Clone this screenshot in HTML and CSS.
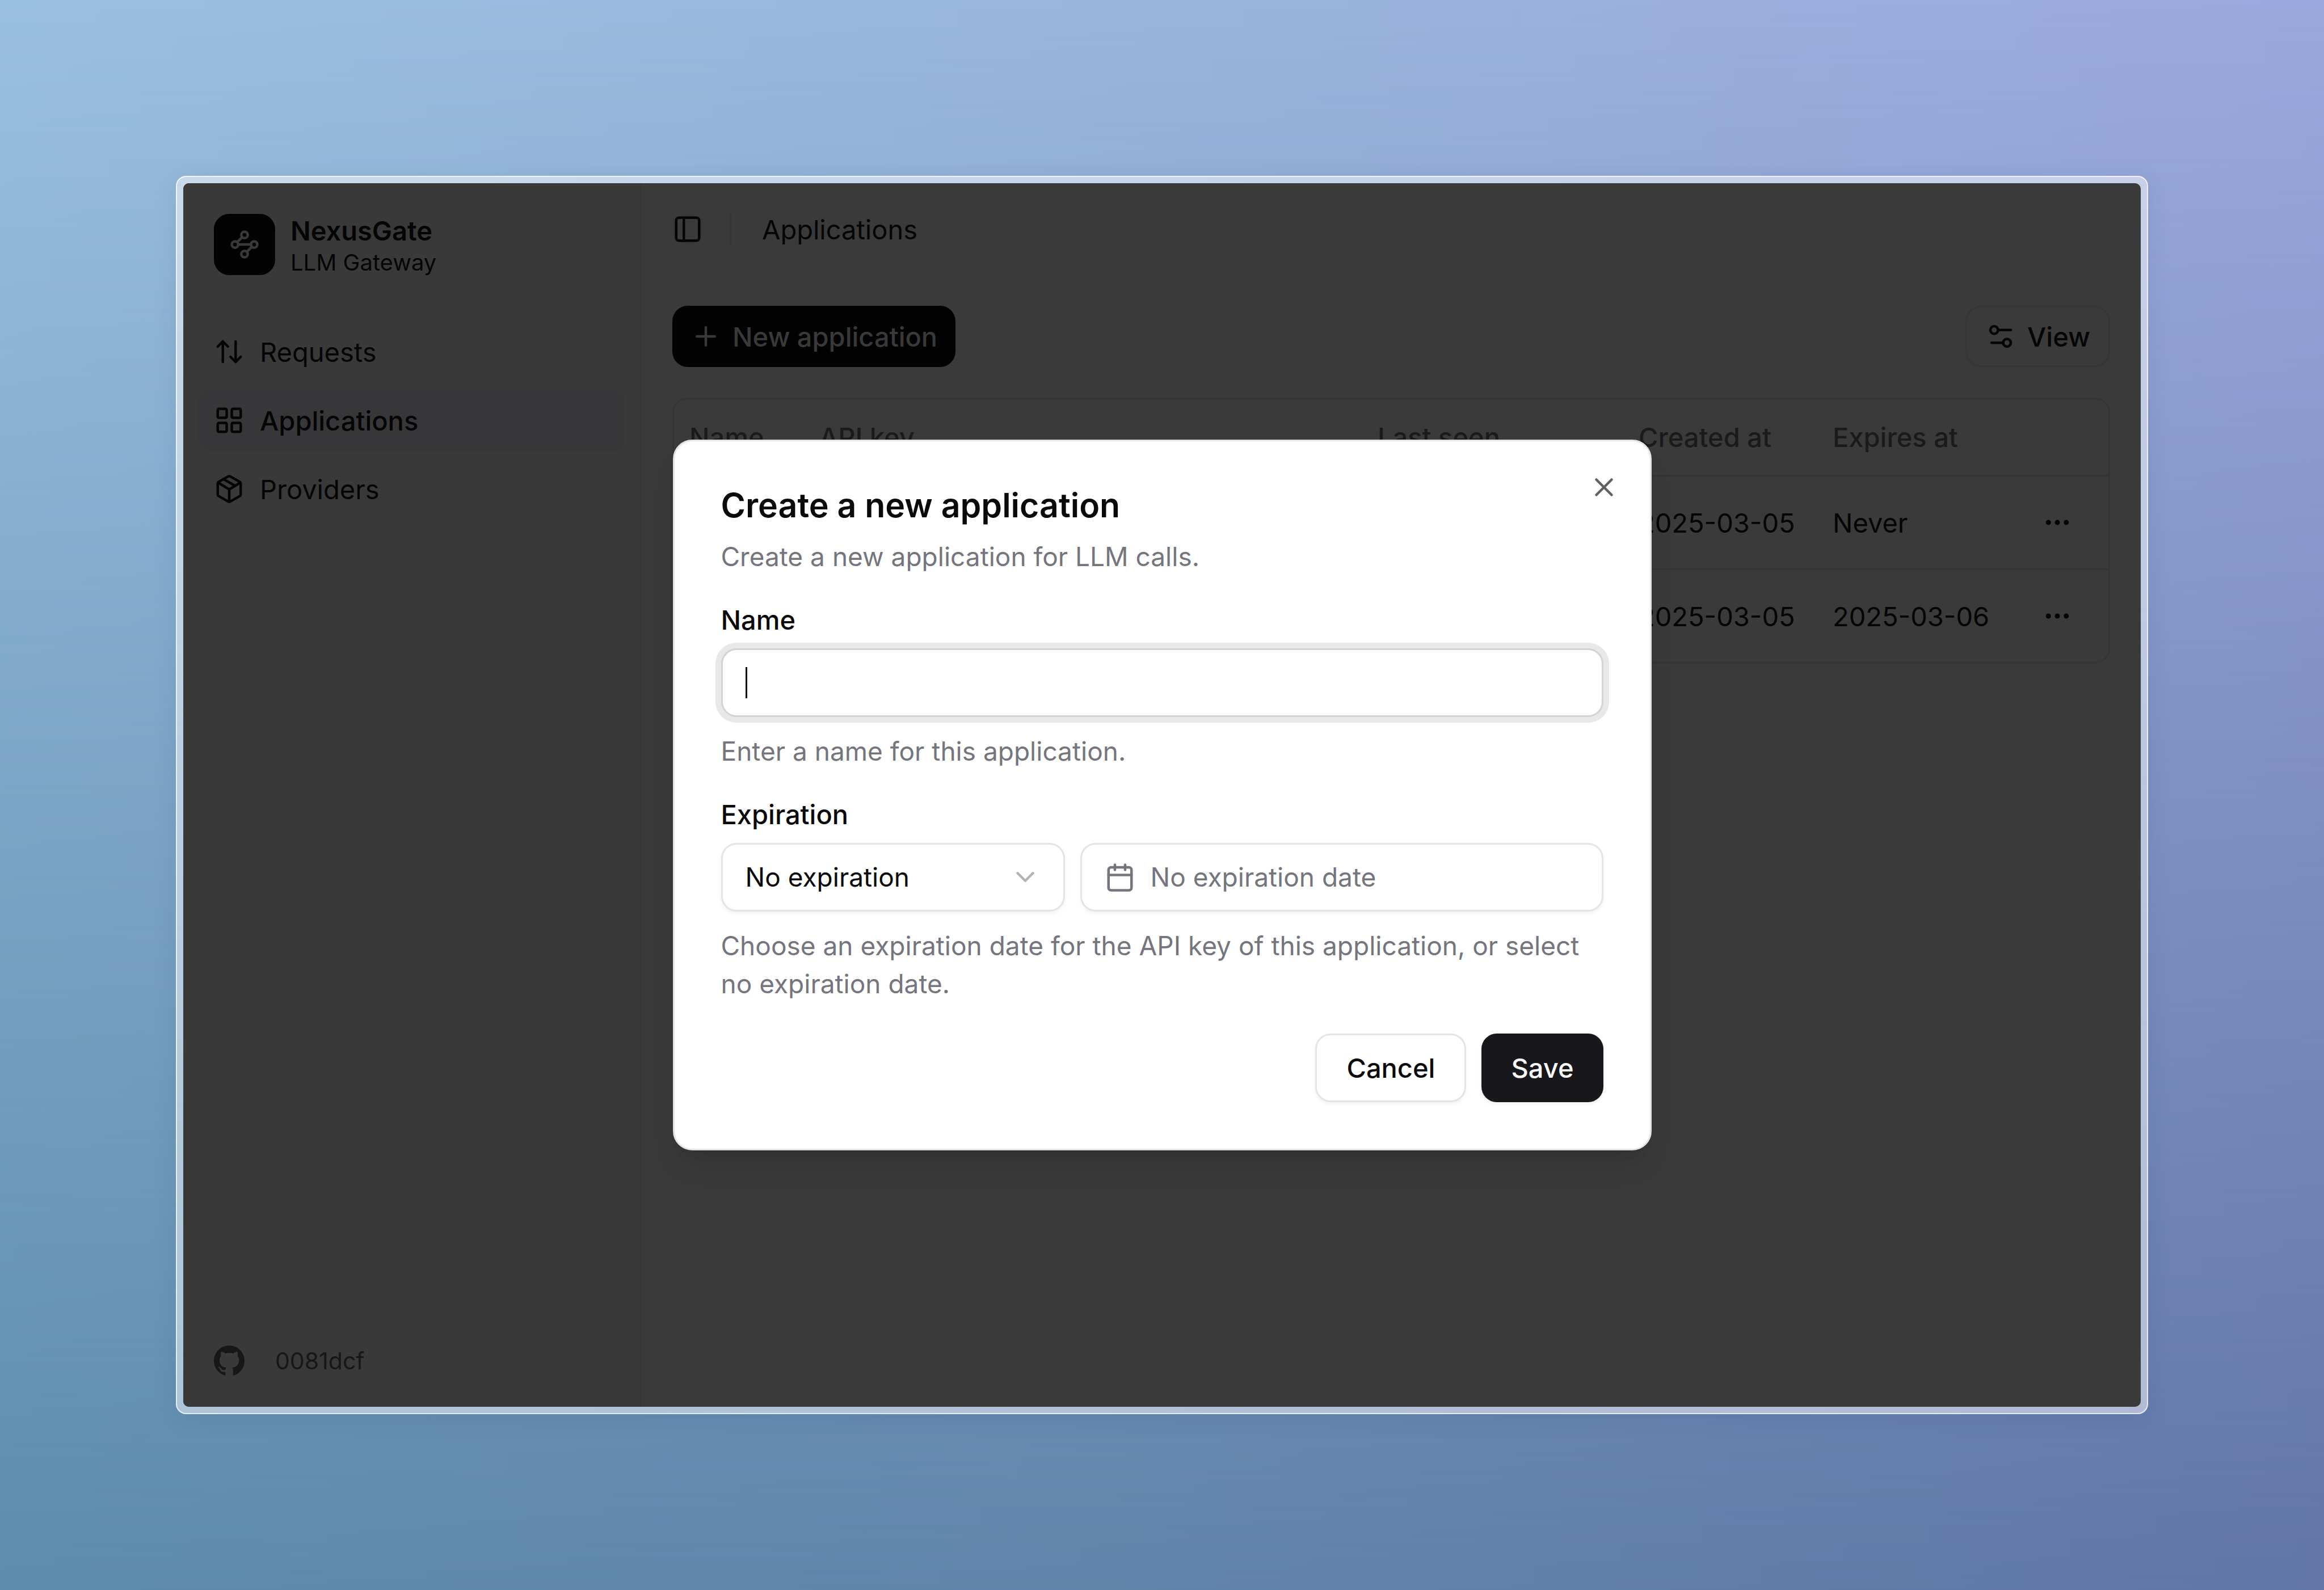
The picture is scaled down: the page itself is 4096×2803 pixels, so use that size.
FILE: index.html
```html
<!DOCTYPE html>
<html lang="en">
<head>
<meta charset="utf-8">
<title>NexusGate – Applications</title>
<link rel="stylesheet" href="styles.css">
</head>
<body>
<div class="stage">
  <div class="frame">
    <div class="app">
      <aside class="sidebar">
        <div class="brand">
          <div class="brand-logo">
            <svg class="icon" viewBox="0 0 24 24"><circle cx="12" cy="4.5" r="2.5"/><path d="m10.2 6.3-3.9 3.9"/><circle cx="4.5" cy="12" r="2.5"/><path d="M7 12h10"/><circle cx="19.5" cy="12" r="2.5"/><path d="m13.8 17.7 3.9-3.9"/><circle cx="12" cy="19.5" r="2.5"/></svg>
          </div>
          <div class="brand-text">
            <span class="brand-name">NexusGate</span>
            <span class="brand-sub">LLM Gateway</span>
          </div>
        </div>
        <nav class="nav">
          <a class="nav-item" href="#requests">
            <svg class="icon" viewBox="0 0 24 24"><path d="m21 16-4 4-4-4"/><path d="M17 20V4"/><path d="m3 8 4-4 4 4"/><path d="M7 4v16"/></svg>
            Requests
          </a>
          <a class="nav-item nav-item-active" href="#applications" aria-current="page">
            <svg class="icon" viewBox="0 0 24 24"><rect width="7" height="7" x="3" y="3" rx="1"/><rect width="7" height="7" x="14" y="3" rx="1"/><rect width="7" height="7" x="14" y="14" rx="1"/><rect width="7" height="7" x="3" y="14" rx="1"/></svg>
            Applications
          </a>
          <a class="nav-item" href="#providers">
            <svg class="icon" viewBox="0 0 24 24"><path d="M11 21.73a2 2 0 0 0 2 0l7-4A2 2 0 0 0 21 16V8a2 2 0 0 0-1-1.73l-7-4a2 2 0 0 0-2 0l-7 4A2 2 0 0 0 3 8v8a2 2 0 0 0 1 1.73z"/><path d="M12 22V12"/><path d="m3.3 7 7.703 4.734a2 2 0 0 0 1.994 0L20.7 7"/><path d="m7.5 4.27 9 5.15"/></svg>
            Providers
          </a>
        </nav>
        <a class="version" href="#version">
          <svg class="icon-solid" viewBox="0 0 16 16"><path d="M8 0C3.58 0 0 3.58 0 8c0 3.54 2.29 6.53 5.47 7.59.4.07.55-.17.55-.38 0-.19-.01-.82-.01-1.49-2.01.37-2.53-.49-2.69-.94-.09-.23-.48-.94-.82-1.13-.28-.15-.68-.52-.01-.53.63-.01 1.08.58 1.23.82.72 1.21 1.87.87 2.33.66.07-.52.28-.87.51-1.07-1.78-.2-3.64-.89-3.64-3.95 0-.87.31-1.59.82-2.15-.08-.2-.36-1.02.08-2.12 0 0 .67-.21 2.2.82.64-.18 1.32-.27 2-.27s1.36.09 2 .27c1.53-1.04 2.2-.82 2.2-.82.44 1.1.16 1.92.08 2.12.51.56.82 1.27.82 2.15 0 3.07-1.87 3.75-3.65 3.95.29.25.54.73.54 1.48 0 1.07-.01 1.93-.01 2.2 0 .21.15.46.55.38A8.01 8.01 0 0 0 16 8c0-4.42-3.58-8-8-8"/></svg>
          0081dcf
        </a>
      </aside>

      <main class="main">
        <header class="topbar">
          <button class="icon-button" type="button" aria-label="Toggle sidebar">
            <svg class="icon" viewBox="0 0 24 24"><rect width="18" height="18" x="3" y="3" rx="2"/><path d="M9 3v18"/></svg>
          </button>
          <span class="separator"></span>
          <span class="crumb">Applications</span>
        </header>
        <div class="content">
          <div class="toolbar">
            <button class="tool-button tool-button-primary" type="button">
              <svg class="icon" viewBox="0 0 24 24"><path d="M5 12h14"/><path d="M12 5v14"/></svg>
              New application
            </button>
            <button class="tool-button tool-button-outline" type="button">
              <svg class="icon" viewBox="0 0 24 24"><path d="M20 7h-9"/><path d="M14 17H5"/><circle cx="17" cy="17" r="3"/><circle cx="7" cy="7" r="3"/></svg>
              View
            </button>
          </div>
          <div class="table-card">
            <table class="table">
              <colgroup>
                <col class="col-name"><col><col class="col-seen"><col class="col-created"><col class="col-expires"><col class="col-actions">
              </colgroup>
              <thead>
                <tr><th>Name</th><th>API key</th><th>Last seen</th><th>Created at</th><th>Expires at</th><th></th></tr>
              </thead>
              <tbody>
                <tr>
                  <td></td><td></td><td></td><td>2025-03-05</td><td>Never</td>
                  <td><button class="icon-button row-menu" type="button" aria-label="Row actions"><svg class="icon" viewBox="0 0 24 24"><circle cx="12" cy="12" r="1"/><circle cx="19" cy="12" r="1"/><circle cx="5" cy="12" r="1"/></svg></button></td>
                </tr>
                <tr>
                  <td></td><td></td><td></td><td>2025-03-05</td><td>2025-03-06</td>
                  <td><button class="icon-button row-menu" type="button" aria-label="Row actions"><svg class="icon" viewBox="0 0 24 24"><circle cx="12" cy="12" r="1"/><circle cx="19" cy="12" r="1"/><circle cx="5" cy="12" r="1"/></svg></button></td>
                </tr>
              </tbody>
            </table>
          </div>
        </div>
      </main>

      <div class="overlay">
        <section class="dialog" role="dialog" aria-labelledby="dialog-title">
          <button class="icon-button dialog-close" type="button" aria-label="Close">
            <svg class="icon" viewBox="0 0 24 24"><path d="M18 6 6 18"/><path d="m6 6 12 12"/></svg>
          </button>
          <div class="dialog-header">
            <h2 class="dialog-title" id="dialog-title">Create a new application</h2>
            <p class="hint">Create a new application for LLM calls.</p>
          </div>
          <form class="form">
            <div class="field">
              <label class="label" for="name">Name</label>
              <div class="input-wrap">
                <input class="control input input-focused" id="name" type="text">
                <span class="caret"></span>
              </div>
              <p class="hint">Enter a name for this application.</p>
            </div>
            <div class="field">
              <label class="label" for="expiration">Expiration</label>
              <div class="control-row">
                <div class="select-wrap">
                  <select class="control select" id="expiration"><option>No expiration</option></select>
                  <svg class="icon select-chevron" viewBox="0 0 24 24"><path d="m6 9 6 6 6-6"/></svg>
                </div>
                <button class="control date-button" type="button">
                  <svg class="icon" viewBox="0 0 24 24"><path d="M8 2v4"/><path d="M16 2v4"/><rect width="18" height="18" x="3" y="4" rx="2"/><path d="M3 10h18"/></svg>
                  No expiration date
                </button>
              </div>
              <p class="hint">Choose an expiration date for the API key of this application, or select no expiration date.</p>
            </div>
            <div class="actions">
              <button class="button button-outline" type="button">Cancel</button>
              <button class="button button-primary" type="submit">Save</button>
            </div>
          </form>
        </section>
      </div>
    </div>
  </div>
</div>
</body>
</html>
```
FILE: styles.css
```css
* {
  box-sizing: border-box;
}

body {
  margin: 0;
  font-family: Inter, "Liberation Sans", sans-serif;
  font-size: 47px;
  line-height: 67px;
  color: #050505;
}

h2,
p {
  margin: 0;
}

button,
input,
select {
  font: inherit;
  color: inherit;
  margin: 0;
}

button {
  cursor: pointer;
}

a {
  color: inherit;
  text-decoration: none;
}

/* Backdrop: two horizontal blends, the lower one faded in towards the bottom */
.stage {
  position: relative;
  isolation: isolate;
  display: flex;
  min-height: 100vh;
  padding: 310px;
  background: linear-gradient(95deg, #9bc0e0, #9ab3dd 55%, #9ca7df);
}

.stage::before {
  content: "";
  position: absolute;
  inset: 0;
  z-index: -1;
  background: linear-gradient(95deg, #5c8dad, #6184ab 50%, #6175a7);
  mask-image: linear-gradient(180deg, transparent, #000);
}

.frame {
  flex: 1;
  display: flex;
  padding: 11px;
  border: 2px solid rgba(255, 255, 255, 0.7);
  border-radius: 18px;
  background: rgba(255, 255, 255, 0.48);
  box-shadow: 0 8px 40px rgba(30, 50, 100, 0.1);
}

.app {
  position: relative;
  flex: 1;
  display: flex;
  overflow: hidden;
  border-radius: 10px;
  background: #3a3a3a;
}

.icon {
  flex: none;
  display: block;
  width: 54px;
  height: 54px;
  fill: none;
  stroke: currentColor;
  stroke-width: 2;
  stroke-linecap: round;
  stroke-linejoin: round;
}

.icon-solid {
  flex: none;
  width: 54px;
  height: 54px;
  fill: currentColor;
}

.icon-button {
  flex: none;
  padding: 0;
  border: 0;
  background: none;
}

/* Sidebar */
.sidebar {
  flex: none;
  display: flex;
  flex-direction: column;
  width: 808px;
  padding: 54px 27px;
  border-right: 3px solid #363637;
  background: #393939;
}

.brand {
  display: flex;
  gap: 27px;
  height: 108px;
  padding: 0 27px;
}

.brand-logo {
  flex: none;
  display: grid;
  place-items: center;
  width: 108px;
  height: 108px;
  border-radius: 27px;
  background: #020202;
  color: #393939;
}

.brand-text {
  display: flex;
  flex-direction: column;
}

.brand-name {
  line-height: 59px;
  font-weight: 600;
}

.brand-sub {
  font-size: 40px;
  line-height: 54px;
}

.nav {
  flex: 1;
  display: flex;
  flex-direction: column;
  gap: 13px;
  margin-top: 81px;
}

.nav-item {
  display: flex;
  align-items: center;
  gap: 27px;
  height: 108px;
  padding: 0 27px;
  border-radius: 20px;
}

.nav-item-active {
  background: #373739;
  font-weight: 500;
}

.version {
  display: flex;
  align-items: center;
  gap: 54px;
  height: 54px;
  padding: 0 27px;
  font-size: 41px;
  color: #171719;
}

/* Main column */
.main {
  flex: 1;
  min-width: 0;
}

.topbar {
  display: flex;
  align-items: center;
  height: 162px;
  padding: 0 54px;
}

.separator {
  width: 3px;
  height: 54px;
  margin: 0 54px 0 47px;
  background: #353536;
}

.content {
  display: flex;
  flex-direction: column;
  gap: 54px;
  padding: 54px;
}

.toolbar {
  display: flex;
  justify-content: space-between;
}

.tool-button {
  display: flex;
  align-items: center;
  gap: 20px;
  height: 108px;
  padding: 0 32px;
  border: 0;
  border-radius: 27px;
  font-weight: 500;
}

.tool-button-primary {
  background: #020202;
  color: #393939;
}

.tool-button-outline {
  border: 3px solid #363637;
  background: none;
}

.table-card {
  border: 3px solid #353536;
  border-radius: 27px;
  overflow: hidden;
}

.table {
  width: 100%;
  table-layout: fixed;
  border-spacing: 0;
}

.table th,
.table td {
  padding: 0 27px;
  text-align: left;
  white-space: nowrap;
}

.table th {
  height: 136px;
  border-bottom: 3px solid #343435;
  font-weight: 500;
  color: #1a1a1c;
}

.table td {
  height: 165px;
  border-bottom: 3px solid #353536;
}

.table tr:last-child td {
  height: 162px;
  border-bottom: 0;
}

.col-name {
  width: 229px;
}

.col-seen {
  width: 460px;
}

.col-created {
  width: 342px;
}

.col-expires {
  width: 332px;
}

.col-actions {
  width: 181px;
}

.row-menu {
  display: block;
  margin: 0 auto;
}

/* Dialog */
.overlay {
  position: absolute;
  inset: 0;
  display: grid;
  place-items: center;
}

.dialog {
  position: relative;
  display: flex;
  flex-direction: column;
  gap: 54px;
  width: 1725px;
  max-width: 100%;
  padding: 82px;
  border: 3px solid #e4e4e7;
  border-radius: 34px;
  background: #fff;
  box-shadow: 0 34px 50px -10px rgba(0, 0, 0, 0.1), 0 14px 20px -14px rgba(0, 0, 0, 0.1);
  color: #0a0a0b;
}

.dialog-close {
  position: absolute;
  top: 54px;
  right: 54px;
  color: #616163;
}

.dialog-header {
  display: flex;
  flex-direction: column;
  gap: 27px;
}

.dialog-title {
  font-size: 59px;
  line-height: 61px;
  font-weight: 600;
}

.hint {
  font-size: 46px;
  color: #75757d;
}

.form {
  display: flex;
  flex-direction: column;
  gap: 54px;
}

.field {
  display: flex;
  flex-direction: column;
  gap: 27px;
}

.label {
  line-height: 47px;
  font-weight: 500;
}

.control {
  display: block;
  width: 100%;
  height: 121px;
  padding: 0 40px;
  border: 3px solid #e4e4e7;
  border-radius: 27px;
  outline: 0;
  background: #fff;
  box-shadow: 0 4px 7px rgba(0, 0, 0, 0.05);
  font-size: 46px;
}

.input-wrap,
.select-wrap {
  position: relative;
}

.input-focused {
  border-color: #d3d3d6;
  box-shadow: 0 0 0 10px #e8e8ea;
}

.caret {
  position: absolute;
  top: 33px;
  left: 43px;
  width: 3px;
  height: 55px;
  background: #0a0a0b;
}

.control-row {
  display: flex;
  gap: 27px;
}

.select-wrap {
  flex: none;
  width: 606px;
}

.select {
  appearance: none;
}

.select-chevron {
  position: absolute;
  top: 33px;
  right: 43px;
  opacity: 0.3;
  pointer-events: none;
}

.date-button {
  display: flex;
  flex: 1;
  align-items: center;
  gap: 27px;
  color: #75757d;
}

.actions {
  display: flex;
  justify-content: flex-end;
  gap: 27px;
}

.button {
  height: 121px;
  padding: 0 52px;
  border: 0;
  border-radius: 27px;
  font-weight: 500;
  box-shadow: 0 4px 7px rgba(0, 0, 0, 0.05);
}

.button-outline {
  border: 3px solid #e4e4e7;
  background: #fff;
}

.button-primary {
  background: #18171c;
  color: #fafafa;
}
```
